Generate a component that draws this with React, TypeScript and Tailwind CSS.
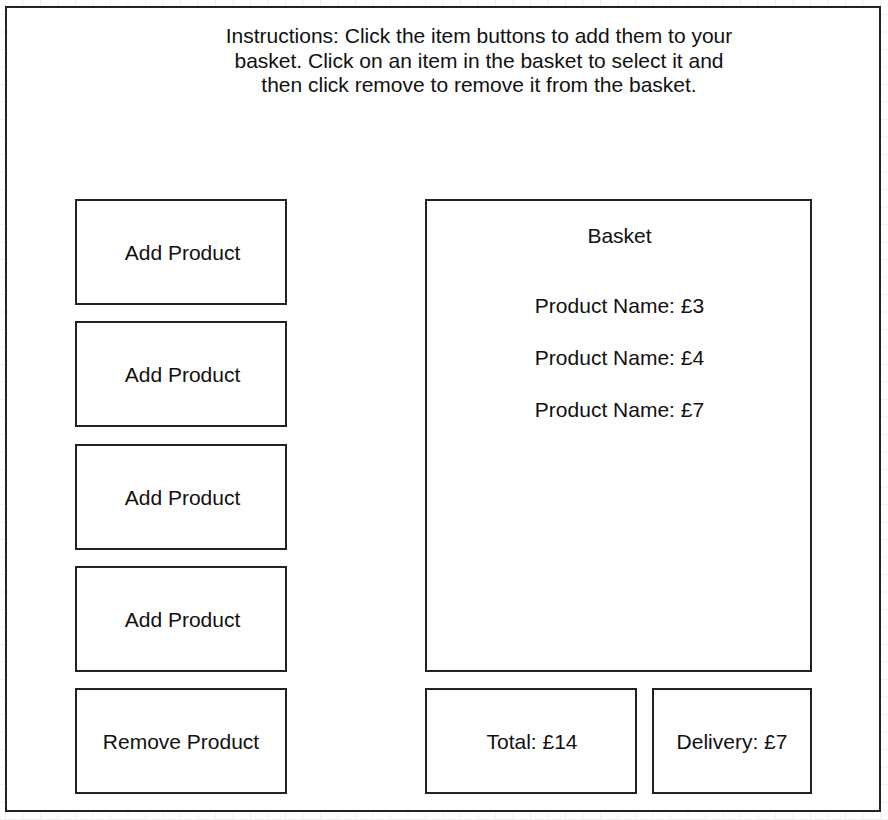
import React from 'react'

const font = "font-['Liberation_Sans',Arial,Helvetica,sans-serif]"

const addButtons = [
  { label: 'Add Product', gap: 'mt-0' },
  { label: 'Add Product', gap: 'mt-[16px]' },
  { label: 'Add Product', gap: 'mt-[17px]' },
  { label: 'Add Product', gap: 'mt-[16px]' },
]

const basketItems = [
  { name: 'Product Name', price: 3 },
  { name: 'Product Name', price: 4 },
  { name: 'Product Name', price: 7 },
]

function Box({ children, className = '' }: { children?: React.ReactNode; className?: string }) {
  return (
    <div className={`border-2 border-[#222] bg-white flex items-center justify-center pt-[2px] ${className}`}>
      {children}
    </div>
  )
}

export default function App() {
  const total = basketItems.reduce((sum, i) => sum + i.price, 0)

  return (
    <div
      className={`w-[888px] h-[820px] overflow-hidden bg-white bg-[image:linear-gradient(to_right,#efefef_1px,transparent_1px),linear-gradient(to_bottom,#efefef_1px,transparent_1px)] bg-[size:17.5px_17.5px] bg-[position:5px_14px] pt-[6px] pl-[5px] text-[21px] leading-[24.5px] text-[#111] ${font}`}
    >
      {/* Outer frame */}
      <div className="w-[876px] h-[806px] border-2 border-[#222] bg-white flex flex-col">
        {/* Instructions */}
        <p className="w-[600px] ml-[172px] pt-[16px] text-center">
          Instructions: Click the item buttons to add them to your
          <br />
          basket. Click on an item in the basket to select it and
          <br />
          then click remove to remove it from the basket.
        </p>

        {/* Main area */}
        <div className="flex mt-[101.5px] pl-[68px]">
          {/* Left: product buttons */}
          <div className="flex flex-col w-[212px]">
            {addButtons.map((b, i) => (
              <Box key={i} className={`h-[106px] pl-[3px] ${b.gap}`}>
                {b.label}
              </Box>
            ))}
            <Box className="h-[106px] mt-[16px]">Remove Product</Box>
          </div>

          {/* Right: basket + totals */}
          <div className="flex flex-col ml-[138px] w-[387px]">
            <div className="h-[473px] border-2 border-[#222] bg-white flex flex-col items-center pl-[2px]">
              <div className="pt-[23px]">Basket</div>
              <div className="flex flex-col items-center gap-[27.5px] mt-[45px]">
                {basketItems.map((item, i) => (
                  <div key={i}>
                    {item.name}: £{item.price}
                  </div>
                ))}
              </div>
            </div>
            <div className="flex mt-[16px] gap-[15px]">
              <Box className="w-[212px] h-[106px] pl-[2px]">Total: £{total}</Box>
              <Box className="w-[160px] h-[106px]">Delivery: £7</Box>
            </div>
          </div>
        </div>
      </div>
    </div>
  )
}
